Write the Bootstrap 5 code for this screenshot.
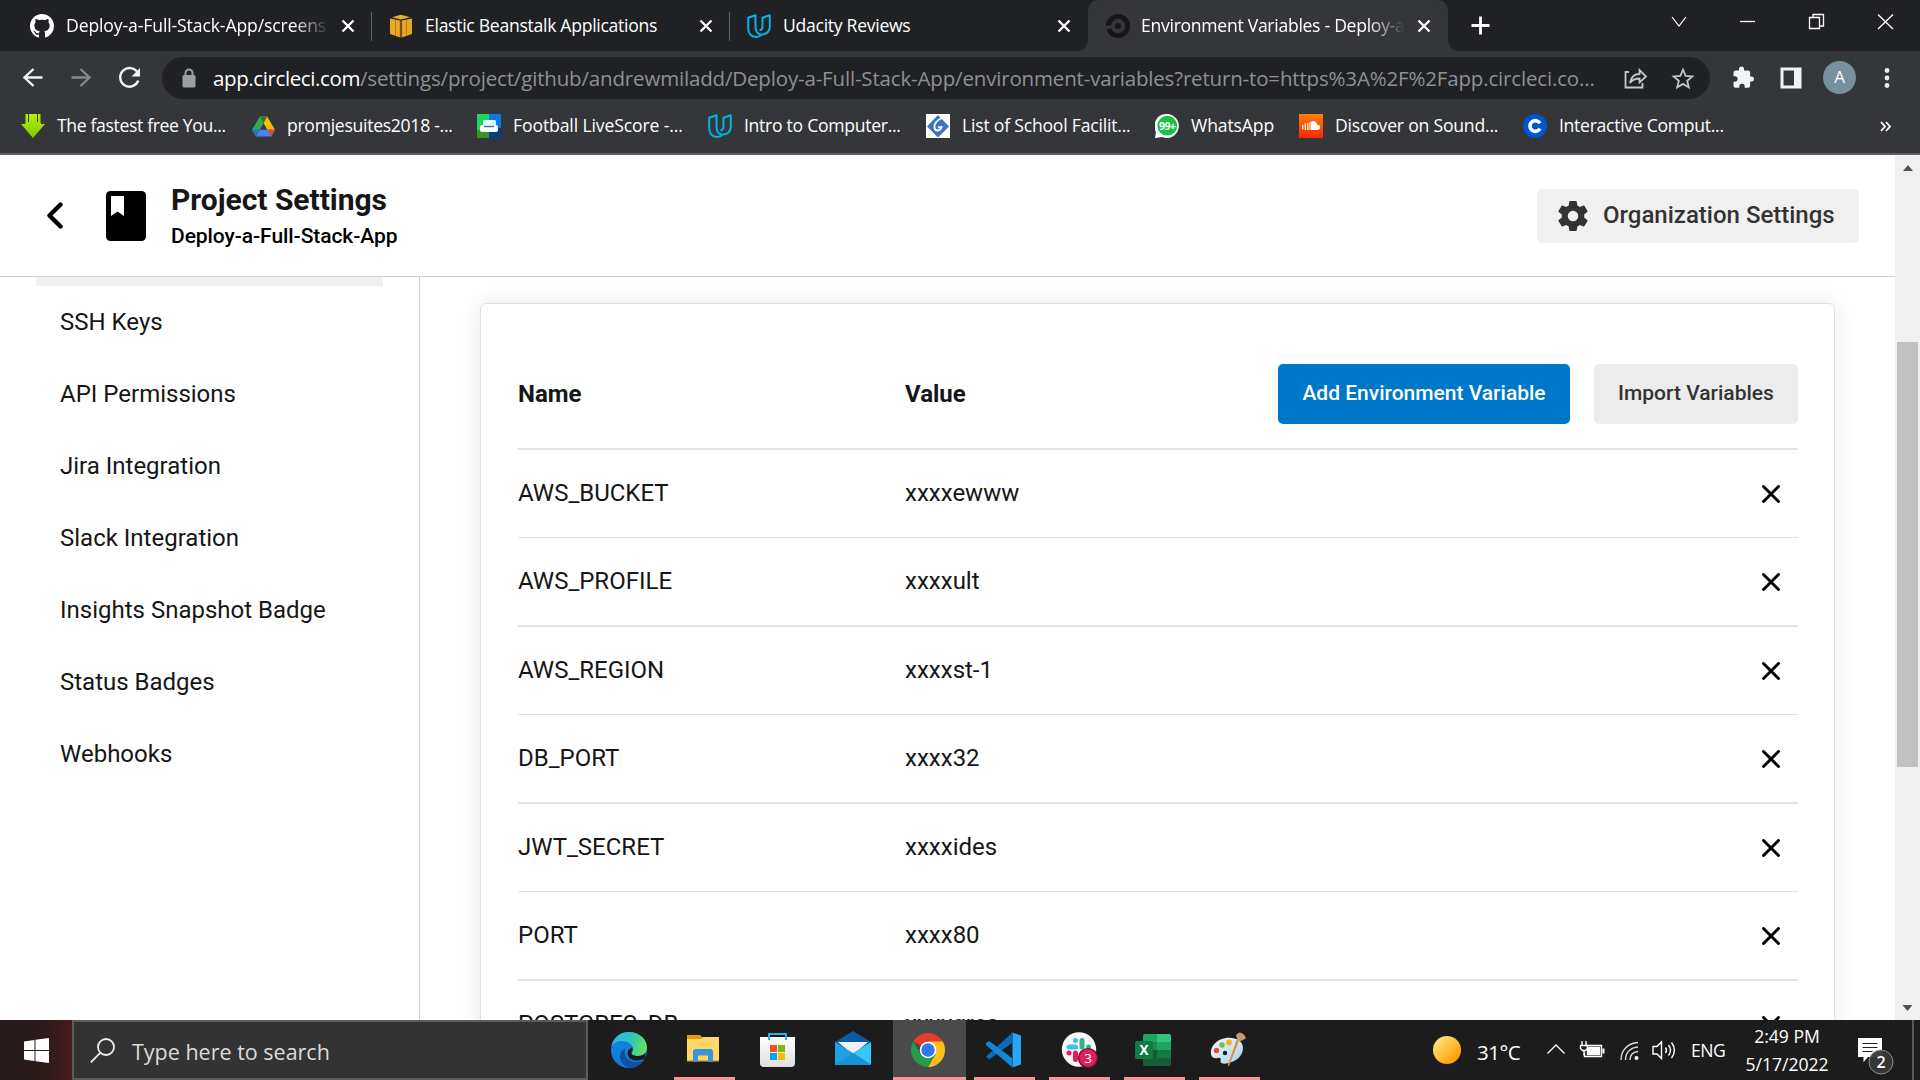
<!DOCTYPE html>
<html lang="en">
<head>
<meta charset="utf-8">
<title>Environment Variables - Deploy-a-Full-Stack-App</title>
<link href="https://cdn.jsdelivr.net/npm/bootstrap@5.3.0/dist/css/bootstrap.min.css" rel="stylesheet">
<style>
html,body{height:1080px;overflow:hidden}
body{font-family:Roboto,"Liberation Sans",sans-serif;color:#161616;line-height:1.2}
svg{display:block;flex:none}
.ui-font{font-family:"Open Sans","Noto Sans",sans-serif;white-space:nowrap}
.t1{letter-spacing:-.12px}.t2{letter-spacing:-.21px}.t3{letter-spacing:-.29px}.t4{letter-spacing:-.35px}
/* browser chrome */
.tabstrip{height:51px;background:#202124;color:#fff;font-size:17.6px}
.tab{width:358px;height:51px;position:relative;padding:0 17px}
.tab.first{width:372px;padding-left:30px}
.tab.sep::after{content:"";position:absolute;right:0;top:12px;width:1px;height:29px;background:#5f6368}
.tab.active-tab{width:360px;background:#35363a;border-radius:11px 11px 0 0;padding-left:18px}
.active-tab::before,.active-tab::after{content:"";position:absolute;bottom:0;width:10px;height:10px}
.active-tab::before{left:-10px;background:radial-gradient(circle at 0 0,transparent 9.5px,#35363a 10px)}
.active-tab::after{right:-10px;background:radial-gradient(circle at 100% 0,transparent 9.5px,#35363a 10px)}
.tab-title{width:264px;margin-left:11px;overflow:hidden}
.tab-title.mid{width:272px;margin-left:12px}
.tab-title.fade-end{-webkit-mask-image:linear-gradient(90deg,#000 86%,transparent 100%)}
.tab.first .tab-title{margin-left:12px}
.toolbar{height:52px;background:#35363a;padding-top:6px}
.omni{width:1548px;height:42px;border-radius:21px;background:#202124;font-size:20.5px;color:#8d9195;padding-left:18px}
.omni b{font-weight:400;color:#fff;letter-spacing:-.39px}
.omni .rest{letter-spacing:-.166px}
.url-text{padding-left:15px}
.avatar-a{width:33px;height:33px;border-radius:50%;background:#78909c;color:#fff;font-size:17px;margin:4px 0 0 1px}
.bookmarks{height:52px;background:#35363a;border-bottom:2px solid #5f6165;color:#fff;font-size:17.6px;padding-left:21px}
.bm{height:46px}
.bm svg{margin-right:12px}
/* page */
.viewport-area{height:865px;overflow:hidden;background:#fff}
.page{width:1895px;height:865px;overflow:hidden}
.page-head{height:122px;flex:none;border-bottom:1px solid #d0d0d0;padding:0 36px 0 47px}
.title-block{margin:2px 0 0 25px}
.page-title{font-size:30px;font-weight:700;line-height:36px;letter-spacing:-.02px}
.page-sub{font-size:21px;font-weight:500;color:#000;line-height:30px;letter-spacing:-.07px;margin-top:3px}
.org-btn{width:322px;height:54px;border-radius:5px;background:#f0f0f0;color:#333;font-size:24px;font-weight:500;padding:0 0 0 21px;border:0}
.org-btn svg{margin-right:15px}
.side{width:420px;border-right:1px solid #d0d0d0;padding-left:36px}
.side-active{width:347px;height:9px;background:#f0f0f0}
.side-link{height:72px;padding-left:24px;font-size:24px;line-height:72px;color:#161616}
.env-card{width:1355px;height:900px;margin:26px 0 0 60px;border:1px solid #e0e0e0;border-radius:6px;box-shadow:0 0 26px rgba(0,0,0,.09);padding:60px 36px 0 37px;flex:none}
.env-head{height:86px;border-bottom:2px solid #e2e2e2;font-size:24px;font-weight:700;padding-bottom:24px}
.col-name{width:387px}
.b-env{height:60px;border:0;border-radius:5px;font-size:21px;font-weight:500;padding:0}
.b-add{width:292px;background:#0078ca;color:#fff}
.b-imp{width:204px;background:#ececec;color:#333;margin-left:24px}
.env-row{height:88px;border-bottom:1px solid #e2e2e2;font-size:24px;padding-right:18px}
.env-row:nth-child(even){height:89px;border-bottom-width:2px}
.env-row svg{margin-left:auto}
.sbar{width:25px;background:#f0f0f0;padding:10px 0 9px}
.sthumb{width:21px;height:425px;background:#c1c1c1;margin-top:171px}
/* taskbar */
.taskbar{height:60px;background:#1c1c1c;color:#fff}
.start{width:72px;height:60px;background:linear-gradient(90deg,#261b1b 0%,#2b1a1a 60%,#491a1b 100%)}
.searchbox{width:516px;height:60px;background:#333;border:2px solid #5c5c5c;color:#dcdcdc;font-size:21.5px;padding-left:16px}
.searchbox span{margin:3px 0 0 17px}
.task{width:61px;height:60px;margin-right:14px;position:relative}
.task.run::after{content:"";position:absolute;left:0;right:0;bottom:0;height:3px;background:#ff9299}
.task.sel{width:73px;background:#4a4a4a;margin:0 8px 0 -6px}
.tray{font-size:17.6px}
.temp{margin:4px 0 0 16px;font-size:20.5px;letter-spacing:-.5px;width:69px}
.lang{letter-spacing:-.5px;width:51px;padding-top:1px}
.clock{width:90px;line-height:28px;margin-right:3px;letter-spacing:-.02px}
</style>
<script src="https://cdn.jsdelivr.net/npm/bootstrap@5.3.0/dist/js/bootstrap.bundle.min.js"></script>
</head>
<body>
<svg width="0" height="0" class="position-absolute">
<defs>
<symbol id="x" viewBox="0 0 14 14"><path d="M1.500 1.500l11 11M12.500 1.500l-11 11" stroke="#fff" stroke-width="2.300" fill="none"/></symbol>
<symbol id="del" viewBox="0 0 18 18"><path d="M1.500 1.500l15 15M16.500 1.500l-15 15" stroke="#000" stroke-width="2.900" stroke-linecap="round"/></symbol>
<symbol id="udacity" viewBox="0 0 24 24"><path d="M1.200 3.800L8.500 1.200V12.500c0 5 2.200 7.700 6 8.200-1.200 1.500-3 2.300-5.200 2.300-4.700 0-8.100-3.300-8.100-8.500zM14.500 20.700c5-.5 8.300-3.500 8.300-8.200V1.200L15.500 3.800v8.700c0 2.200-1 3.500-3 4" fill="none" stroke="#02b3e4" stroke-width="2" stroke-linejoin="round"/></symbol>
</defs></svg>

<div class="d-flex flex-column">
<header class="ui-font">
 <div class="tabstrip d-flex">
  <div class="tab first sep d-flex align-items-center">
   <svg width="24" height="24" viewBox="0 0 16 16" fill="#fff"><path d="M8 0C3.580 0 0 3.580 0 8c0 3.540 2.290 6.530 5.470 7.590.4.070.550-.170.550-.380 0-.190-.010-.820-.010-1.490-2.010.370-2.530-.490-2.690-.940-.090-.230-.480-.940-.820-1.130-.280-.150-.680-.520-.010-.530.630-.010 1.080.580 1.230.820.720 1.210 1.870.870 2.330.660.070-.520.280-.870.510-1.070-1.780-.200-3.640-.890-3.640-3.950 0-.870.310-1.590.820-2.150-.080-.200-.360-1.020.080-2.120 0 0 .670-.210 2.200.820.640-.180 1.320-.270 2-.270s1.360.090 2 .270c1.530-1.040 2.200-.820 2.200-.820.440 1.100.160 1.920.080 2.120.510.560.820 1.270.820 2.150 0 3.070-1.870 3.750-3.650 3.950.290.250.540.730.540 1.480 0 1.070-.010 1.930-.010 2.200 0 .210.150.460.550.380A8.010 8.010 0 0 0 16 8c0-4.420-3.580-8-8-8z"/></svg>
   <div class="tab-title fade-end t1">Deploy-a-Full-Stack-App/screens</div>
   <svg class="ms-auto" width="14" height="14"><use href="#x"/></svg>
  </div>
  <div class="tab sep d-flex align-items-center">
   <svg width="24" height="24" viewBox="0 0 24 24"><path d="M1 4.500L11.200 6.500V23.500L1 20zM23 4.500L12.800 6.500V23.500L23 20z" fill="#eba625"/><path d="M3 3.200L12 .8l9 2.400-9 2.200z" fill="#f0ad2d"/><path d="M11.200 6.500v17M12.800 6.500v17M6.500 5.500v16.300M17.500 5.500v16.300" stroke="#9b6a12" stroke-width=".7"/></svg>
   <div class="tab-title mid t3">Elastic Beanstalk Applications</div>
   <svg class="ms-auto" width="14" height="14"><use href="#x"/></svg>
  </div>
  <div class="tab d-flex align-items-center">
   <svg width="24" height="24"><use href="#udacity"/></svg>
   <div class="tab-title mid t3">Udacity Reviews</div>
   <svg class="ms-auto" width="14" height="14"><use href="#x"/></svg>
  </div>
  <div class="tab active-tab d-flex align-items-center">
   <svg width="24" height="24" viewBox="0 0 24 24"><path d="M2.800 9.300A9.600 9.600 0 1 1 2.800 14.700" fill="none" stroke="#161616" stroke-width="4.800"/><path d="M0 9.200h5.500v2.500H0z" fill="#161616"/><circle cx="12" cy="12" r="2.900" fill="#161616"/></svg>
   <div class="tab-title fade-end t3">Environment Variables - Deploy-a</div>
   <svg class="ms-auto" width="14" height="14"><use href="#x"/></svg>
  </div>
  <svg width="472" height="51" viewBox="1448 0 472 51" fill="none" stroke="#fff"><path d="M1471.500 25.500h18M1480.500 16.500v18" stroke-width="2.800"/><path d="M1672 17l7 9 7-9" stroke-width="1.200"/><path d="M1740 21.500h15" stroke-width="1.300"/><path d="M1809.500 17.500h10v11h-10zM1813 17v-2.500h10.500v11.500h-3.500" stroke-width="1.300"/><path d="M1878 14.500l15 14.500M1893 14.500l-15 14.500" stroke-width="1.300"/></svg>
 </div>
 <div class="toolbar d-flex">
  <svg width="162" height="42" viewBox="0 57 162 42" fill="none" stroke-width="2.400"><path d="M42.500 77.500H25M33.500 69l-9 8.500 9 8.500" stroke="#f1f3f4"/><path d="M71.500 77.500H89M80.500 69l9 8.500-9 8.500" stroke="#85878a"/><path d="M137.500 72.500a9.300 9.300 0 1 0 .8 8" stroke="#f1f3f4"/><path d="M140 68v8.500h-8.500z" fill="#f1f3f4"/></svg>
  <div class="omni d-flex align-items-center">
   <svg width="18" height="22" viewBox="0 0 18 22"><rect x="2.500" y="8" width="13" height="12.500" rx="1.500" fill="#9aa0a6"/><path d="M5.500 9V6a3.500 3.500 0 0 1 7 0v3" fill="none" stroke="#9aa0a6" stroke-width="2"/></svg>
   <div class="url-text"><b>app.circleci.com</b><span class="rest">/settings/project/github/andrewmiladd/Deploy-a-Full-Stack-App/environment-variables?return-to=https%3A%2F%2Fapp.circleci.co...</span></div>
   <svg class="ms-auto" width="90" height="42" viewBox="1620 57 90 42" fill="none" stroke="#c4c7ca" stroke-width="1.800"><path d="M1629 72h-3.500v15.500h17V83"/><path d="M1630 83c1-6 4-9 9.500-9v-4l6.500 6.500-6.500 6v-4c-4 0-7 1-9.500 4.500z"/><path d="M1683 69.500l2.600 6.300 6.800.6-5.200 4.400 1.600 6.600-5.800-3.500-5.800 3.500 1.600-6.600-5.200-4.400 6.800-.6z"/></svg>
  </div>
  <svg width="112" height="42" viewBox="1709 57 112 42"><path d="M1750.500 76.500h-1.400v-4a2 2 0 0 0-2-2h-4.100V69a2.500 2.500 0 0 0-5 0v1.500h-3.500a2 2 0 0 0-2 2v3.800h1.400a2.700 2.700 0 0 1 0 5.400h-1.400v4.100a2 2 0 0 0 2 2h3.800v-1.400a2.700 2.700 0 0 1 5.400 0v1.400h3.400a2 2 0 0 0 2-2v-4.300h1.400a2.500 2.500 0 0 0 0-5z" fill="#f1f3f4"/><path d="M1779.500 67.500h21v21h-21z" fill="#f1f3f4"/><path d="M1782.500 70.500h10.500v15h-10.500z" fill="#35363a"/></svg>
  <div class="avatar-a d-flex align-items-center justify-content-center">A</div>
  <svg width="62" height="42" viewBox="1856 57 62 42" fill="#f1f3f4"><circle cx="1887" cy="70.500" r="2.400"/><circle cx="1887" cy="78" r="2.400"/><circle cx="1887" cy="85.500" r="2.400"/></svg>
 </div>
 <div class="bookmarks d-flex">
  <div class="bm d-flex align-items-center" style="width:231px"><svg width="24" height="24" viewBox="0 0 24 24"><defs><linearGradient id="gd" x2="0" y2="1"><stop stop-color="#b8f000"/><stop offset="1" stop-color="#7cc800"/></linearGradient></defs><path d="M4 0h16v10h4L12 24 0 10h4z" fill="url(#gd)"/><path d="M4 0v9M20 0v9M7.500 0v8M16.500 0v8" stroke="#35363a" stroke-width="1"/></svg><span class="t4">The fastest free You...</span></div>
  <div class="bm d-flex align-items-center" style="width:225px"><svg width="23" height="22" viewBox="0 0 24 22"><path d="M8.200 1L0 15l4 7L12 8z" fill="#34a853"/><path d="M8.200 1h7.600L24 15h-8z" fill="#fbbc04"/><path d="M4 22h16l4-7H8z" fill="#4285f4"/><path d="M8 15H0l4 7z" fill="#3468c9"/><path d="M16 15h8l-4 7z" fill="#ea4335"/><path d="M8.200 1h7.600L12 8z" fill="#188038"/></svg><span class="t3">promjesuites2018 -...</span></div>
  <div class="bm d-flex align-items-center" style="width:231px"><svg width="24" height="24" viewBox="0 0 24 24"><path d="M0 0h12v24H0z" fill="#1bd760"/><path d="M12 0h12v24H12z" fill="#0a78e6"/><path d="M0 16h12v8H0z" fill="#389326"/><path d="M12 14h12v10H12z" fill="#073e86"/><rect x="6" y="6" width="13" height="7" rx="1.500" fill="#dff"/><rect x="3" y="11" width="18" height="7" rx="2" fill="#fff"/><path d="M7 12.500h10" stroke="#397b9b" stroke-width="1.500"/></svg><span class="t1">Football LiveScore -...</span></div>
  <div class="bm d-flex align-items-center" style="width:218px"><svg width="24" height="24"><use href="#udacity"/></svg><span class="t3">Intro to Computer...</span></div>
  <div class="bm d-flex align-items-center" style="width:229px"><svg width="24" height="24" viewBox="0 0 24 24"><path d="M0 0h24v24H0z" fill="#fff"/><path d="M12 1l11 11.500L12 23.500 1 12.500z" fill="#3b75bd"/><path d="M16 4c-5 2-8.500 6-7.500 10 .8 3.500 6 3.500 7-1l-3.500.5" fill="none" stroke="#fff" stroke-width="1.800"/></svg><span class="t2">List of School Facilit...</span></div>
  <div class="bm d-flex align-items-center" style="width:144px"><svg width="24" height="24" viewBox="0 0 24 24"><path d="M12 0a12 12 0 1 1-5 23L0 24l1-6A12 12 0 0 1 12 0z" fill="#fff"/><circle cx="12.300" cy="11.700" r="9.900" fill="#19c048"/><text x="12.300" y="15.500" text-anchor="middle" font-size="10.500" font-weight="700" fill="#fff" letter-spacing="-.5">99+</text></svg><span class="t1">WhatsApp</span></div>
  <div class="bm d-flex align-items-center" style="width:224px"><svg width="24" height="24" viewBox="0 0 24 24"><defs><linearGradient id="sc" x2="0" y2="1"><stop stop-color="#ff8000"/><stop offset="1" stop-color="#ff2400"/></linearGradient></defs><path d="M0 0h24v24H0z" fill="url(#sc)"/><path d="M3.800 11v4.500M6.300 9.500V16M8.800 9v7M11 8v8" stroke="#fff" stroke-width="1.200"/><path d="M12 7.800c3-1.800 5.800 0 6.200 3 1.800-.3 3 .9 3 2.500s-1.200 2.700-2.700 2.700H12z" fill="#fff"/></svg><span class="t2">Discover on Sound...</span></div>
  <div class="bm d-flex align-items-center" style="width:352px"><svg width="24" height="24" viewBox="0 0 24 24"><circle cx="12" cy="12" r="12" fill="#0056d2"/><path d="M17 9.300A5.400 5.400 0 1 0 17 14.700" fill="none" stroke="#fff" stroke-width="3.600"/></svg><span class="t3">Interactive Comput...</span></div>
  <svg class="mt-3" width="22" height="16" viewBox="0 0 22 16"><path d="M6 3l4 4.500-4 4.500M11 3l4 4.500-4 4.500" fill="none" stroke="#fff" stroke-width="1.800"/></svg>
 </div>
</header>

<div class="viewport-area d-flex">
 <div class="page d-flex flex-column">
  <div class="page-head d-flex align-items-center">
   <svg width="17" height="28" viewBox="0 0 17 28"><path d="M13.500 2.500L2.500 13.500l11 11" fill="none" stroke="#000" stroke-width="4.400" stroke-linecap="round" stroke-linejoin="round"/></svg>
   <svg width="40" height="50" viewBox="0 0 40 50" style="margin-left:42px"><rect width="40" height="50" rx="4.500"/><path d="M5 5h13v20l-6.500-4.500L5 25z" fill="#fff"/></svg>
   <div class="title-block"><div class="page-title">Project Settings</div><div class="page-sub">Deploy-a-Full-Stack-App</div></div>
   <button class="org-btn ms-auto d-flex align-items-center"><svg width="30" height="30" viewBox="2 2 20 20" fill="#333"><path d="M19.430 12.980c.040-.320.070-.640.070-.980s-.030-.660-.070-.980l2.110-1.650c.190-.150.240-.420.120-.640l-2-3.460c-.120-.220-.390-.300-.610-.220l-2.490 1c-.520-.400-1.080-.730-1.690-.980l-.380-2.650C14.460 2.180 14.250 2 14 2h-4c-.250 0-.460.180-.490.420l-.380 2.650c-.610.250-1.170.590-1.690.980l-2.490-1c-.230-.090-.490 0-.610.220l-2 3.460c-.130.220-.070.490.120.640l2.110 1.650c-.040.320-.070.650-.070.980s.030.660.070.980l-2.110 1.650c-.190.150-.240.420-.120.640l2 3.460c.120.220.390.300.610.220l2.490-1c.520.400 1.080.730 1.690.980l.380 2.650c.030.240.240.420.490.420h4c.250 0 .460-.180.490-.420l.380-2.650c.610-.250 1.170-.590 1.690-.980l2.490 1c.230.090.490 0 .610-.220l2-3.460c.120-.220.070-.490-.120-.640l-2.110-1.650zM12 15.500a3.500 3.500 0 1 1 0-7 3.500 3.500 0 0 1 0 7z"/></svg>Organization Settings</button>
  </div>
  <div class="d-flex flex-grow-1 overflow-hidden">
   <nav class="side flex-shrink-0">
    <div class="side-active"></div>
    <div class="side-link">SSH Keys</div><div class="side-link">API Permissions</div><div class="side-link">Jira Integration</div><div class="side-link">Slack Integration</div><div class="side-link">Insights Snapshot Badge</div><div class="side-link">Status Badges</div><div class="side-link">Webhooks</div>
   </nav>
   <main class="env-card">
    <div class="env-head d-flex align-items-center"><div class="col-name">Name</div><div>Value</div><button class="b-env b-add ms-auto">Add Environment Variable</button><button class="b-env b-imp">Import Variables</button></div>
    <div class="env-rows">
     <div class="env-row d-flex align-items-center"><div class="col-name">AWS_BUCKET</div><div>xxxxewww</div><svg width="18" height="18"><use href="#del"/></svg></div>
     <div class="env-row d-flex align-items-center"><div class="col-name">AWS_PROFILE</div><div>xxxxult</div><svg width="18" height="18"><use href="#del"/></svg></div>
     <div class="env-row d-flex align-items-center"><div class="col-name">AWS_REGION</div><div>xxxxst-1</div><svg width="18" height="18"><use href="#del"/></svg></div>
     <div class="env-row d-flex align-items-center"><div class="col-name">DB_PORT</div><div>xxxx32</div><svg width="18" height="18"><use href="#del"/></svg></div>
     <div class="env-row d-flex align-items-center"><div class="col-name">JWT_SECRET</div><div>xxxxides</div><svg width="18" height="18"><use href="#del"/></svg></div>
     <div class="env-row d-flex align-items-center"><div class="col-name">PORT</div><div>xxxx80</div><svg width="18" height="18"><use href="#del"/></svg></div>
     <div class="env-row d-flex align-items-center"><div class="col-name">POSTGRES_DB</div><div>xxxxgres</div><svg width="18" height="18"><use href="#del"/></svg></div>
    </div>
   </main>
  </div>
 </div>
 <div class="sbar d-flex flex-column align-items-center">
  <svg width="10" height="6" viewBox="0 0 10 6"><path d="M0 6l5-6 5 6z" fill="#505050"/></svg>
  <div class="sthumb"></div>
  <svg class="mt-auto" width="11" height="6" viewBox="0 0 10 6"><path d="M0 0l5 6 5-6z" fill="#505050"/></svg>
 </div>
</div>

<footer class="taskbar ui-font d-flex">
 <div class="start d-flex align-items-center justify-content-center"><svg width="25" height="25" viewBox="0 0 25 25" fill="#fff"><path d="M0 3.500L10.500 2v10H0zM11.500 1.800L25 0v12H11.500zM0 13h10.500v10L0 21.500zM11.500 13H25v12l-13.500-1.800z"/></svg></div>
 <div class="searchbox d-flex align-items-center"><svg width="25" height="25" viewBox="0 0 25 25" fill="none" stroke="#eee" stroke-width="1.800"><circle cx="16" cy="9" r="8"/><path d="M10.500 14.700L.8 24.300"/></svg><span>Type here to search</span></div>
 <div class="task d-flex align-items-center justify-content-center ms-2 ps-1" style="margin-right:17px">
  <svg width="36" height="36" viewBox="0 0 36 36"><defs><linearGradient id="e1" x1="0" y1=".3" x2="1" y2=".5"><stop stop-color="#2fb6ee"/><stop offset=".5" stop-color="#2bc4bd"/><stop offset="1" stop-color="#66e05b"/></linearGradient><linearGradient id="e2" x2="0" y2="1"><stop stop-color="#1681d4"/><stop offset="1" stop-color="#0b7fdf"/></linearGradient></defs><circle cx="18" cy="18" r="18" fill="url(#e2)"/><path d="M.4 14.500C2 6 9 0 18 0c10 0 18 7 18 15.500 0 5-4 8.500-9 8.500-4 0-6.500-1.500-6.500-2.800 0-.9 1.500-1.700 1.500-4.200 0-4-5-8-11-8C6 9 2.500 11 .4 14.500z" fill="url(#e1)"/><path d="M14.500 16c-2 7 1.500 14 10.500 14 3 0 6-1 8-2.500C30 33 25 36 19 36c-6-1-10-6-10-11.500 0-4 2.200-7 5.500-8.500z" fill="#0f50a0"/><path d="M20.500 21.200c0 1.300 2.500 2.800 6.500 2.800 3.500 0 6-1.500 7.500-3.500V27l-3 .5c-6 2.500-13 .5-14.500-4-1-4 1-7.500 4.500-8 .8 3-1 4.800-1 5.700z" fill="#1c1c1c"/></svg>
 </div>
 <div class="task run d-flex align-items-center justify-content-center"><svg width="32" height="27" viewBox="0 0 32 27" class="mb-1 me-1"><path d="M0 0h13l3 3v6H0z" fill="#e0a000"/><path d="M0 4h14l2-2h16v24H0z" fill="#ffd869"/><path d="M0 25h32v1.500H0z" fill="#e3a82f"/><path d="M6 27V16.500c0-1.500 1-2.500 2.500-2.500h15c1.500 0 2.500 1 2.500 2.500V27h-5v-6.500H11V27z" fill="#3a94dc"/></svg></div>
 <div class="task d-flex align-items-center justify-content-center"><svg width="35" height="36" viewBox="0 0 35 36" class="me-1"><defs><linearGradient id="st" x2="0" y2="1"><stop stop-color="#fff"/><stop offset="1" stop-color="#dedede"/></linearGradient></defs><path d="M0 5h35v26a4 4 0 0 1-4 4H4a4 4 0 0 1-4-4z" fill="url(#st)"/><path d="M9 8V2h17v6" fill="none" stroke="#28afea" stroke-width="2"/><path d="M10 13h7v7h-7z" fill="#f25022"/><path d="M18 13h7v7h-7z" fill="#7fba00"/><path d="M10 21h7v7h-7z" fill="#00a4ef"/><path d="M18 21h7v7h-7z" fill="#ffb900"/></svg></div>
 <div class="task d-flex align-items-center justify-content-center"><svg width="36" height="34" viewBox="0 0 36 34" class="mb-1 me-1"><path d="M0 11L18 0l18 11v5H0z" fill="#0c59a4"/><path d="M3 11h30L18 24z" fill="#f1f1f3"/><path d="M0 11l18 11L36 34H0z" fill="#1fa1e2"/><path d="M36 11L18 22l18 12z" fill="#36c7f5"/><path d="M0 34h36L18 22z" fill="#1794d9"/></svg></div>
 <div class="task run sel d-flex align-items-center justify-content-center"><svg class="me-1" width="34" height="34" viewBox="0 0 34 34"><path d="M17 17L2.300 8.500A17 17 0 0 1 31.700 8.500z" fill="#e33b2e"/><path d="M17 8.500h14.700A17 17 0 0 1 17 34l7.400-12.700z" fill="#fdc018"/><path d="M2.300 8.500A17 17 0 0 0 17 34l7.400-12.700L17 17 9.600 21.200z" fill="#259c4c"/><circle cx="17" cy="17" r="8.300" fill="#fff"/><circle cx="17" cy="17" r="6.700" fill="#2f78f0"/></svg></div>
 <div class="task run d-flex align-items-center justify-content-center"><svg class="me-1" width="36" height="36" viewBox="0 0 36 36"><path d="M1 24.500L27 1v10L4 27.500z" fill="#0a6bb8"/><path d="M1 11l3-2 23 17v9L1 13z" fill="#1189d8"/><path d="M26 0l10 3.500v29L26 36c1 0 1.500-.5 1.500-1.500v-33C27.500.5 27 0 26 0z" fill="#27a7f3"/></svg></div>
 <div class="task run d-flex align-items-center justify-content-center"><svg width="37" height="36" viewBox="0 0 37 36"><circle cx="18" cy="17.500" r="17.200" fill="#f7f7f7"/><g stroke-width="5" stroke-linecap="round" fill="none"><path d="M14.500 8.500v0" stroke="#36c5f0"/><path d="M8 15h6.500" stroke="#36c5f0"/><path d="M21 8.500V15" stroke="#2eb67d"/><path d="M27.500 15v0" stroke="#2eb67d"/><path d="M14.500 21v6.500M8 21v0" stroke="#e01e5a"/></g><circle cx="27" cy="26" r="9.500" fill="#e01e5a" stroke="#5c1330" stroke-width="1.200"/><text x="27" y="31" font-size="13.500" text-anchor="middle" fill="#fff">3</text></svg></div>
 <div class="task run d-flex align-items-center justify-content-center"><svg class="me-1" width="36" height="32" viewBox="0 0 36 32"><rect x="8" width="28" height="32" rx="1.500" fill="#185c37"/><path d="M9.500 0H22v8H8V1.500z" fill="#21a366"/><path d="M22 0h12.500l1.500 1.500V8H22z" fill="#33c481"/><path d="M8 8h14v8H8z" fill="#1a8a4f"/><path d="M22 8h14v8H22z" fill="#21a366"/><path d="M22 16h14v8H22z" fill="#107c41"/><rect y="7" width="18" height="18" rx="1.500" fill="#0f7b40"/><text x="9" y="20.800" font-size="13.500" font-weight="700" text-anchor="middle" fill="#fff">X</text></svg></div>
 <div class="task run d-flex align-items-center justify-content-center"><svg class="me-1" width="36" height="36" viewBox="0 0 36 36"><defs><linearGradient id="pl" x2="1" y2="1"><stop stop-color="#f6fbff"/><stop offset="1" stop-color="#a5cdec"/></linearGradient></defs><path d="M16 6C7 7 0 14 1 22c.5 4 4 5 7 4 3-.8 3 1 2.500 3s2 3 6 2.500C26 30 33 24 33 16 33 9 26 5 16 6z" fill="url(#pl)"/><circle cx="15" cy="21" r="2.200" fill="#1c1c1c"/><circle cx="6.500" cy="18.500" r="2.700" fill="#e8473d"/><circle cx="12" cy="13" r="2.700" fill="#67c342"/><circle cx="19" cy="10.500" r="2.900" fill="#f7b51c"/><path d="M29 8.500l-2-1.500-9 25.500c-.5 2 .8 2 1.500.6z" fill="#e8862a"/><path d="M26 3c2-2 4-3.500 5-2 2 0 4 2.500 5 5-2 1.500-5 3.500-8 3.500z" fill="#c59b6d"/></svg></div>
 <div class="tray d-flex align-items-center ms-auto">
  <svg width="28" height="28" viewBox="0 0 28 28"><defs><linearGradient id="sun" x2="1" y2="1"><stop offset=".1" stop-color="#ffe680"/><stop offset=".85" stop-color="#ff9d00"/></linearGradient></defs><circle cx="14" cy="14" r="14" fill="url(#sun)"/></svg>
  <span class="temp">31°C</span>
  <svg width="145" height="60" viewBox="1546 1020 145 60" fill="none" stroke="#fff" stroke-width="1.400"><path d="M1547.500 1053.500l8.500-8.500 8.500 8.500"/><path d="M1586 1045.500h15.500v11h-17v-4"/><path d="M1587.500 1047.500h12v7h-12z" fill="#fff"/><path d="M1603.500 1048.500v5" stroke-width="2"/><path d="M1582 1041v4M1586 1041v4M1580.500 1045.500h7v3l-2 2h-3l-2-2zM1584 1050.500v5"/><path d="M1621 1060c0-10 7-17 17-17.500M1625.500 1060c0-7.500 5-12.500 12.500-13M1630 1060c0-5 3-8 8-8.500" stroke="#ddd"/><circle cx="1636.500" cy="1058" r="2" fill="#fff" stroke="none"/><path d="M1653 1046.500h4l4.500-4.500v16.500l-4.500-4.500h-4zM1665.500 1047.500q2 2.500 0 5.500M1668.500 1045q4 5 0 10.500M1671.500 1042.500q6 8 0 15.500"/></svg>
  <span class="lang">ENG</span>
  <div class="clock text-center"><div>2:49 PM</div><div>5/17/2022</div></div>
  <svg width="85" height="60" viewBox="1835 1020 85 60"><path d="M1858 1038h24v19h-14l-4.500 5v-5h-5.500z" fill="#fff"/><path d="M1862.500 1043.500h15M1862.500 1047.500h15M1862.500 1051.500h10" stroke="#222" stroke-width="1.200"/><circle cx="1881" cy="1062" r="12" fill="#383838" fill-opacity=".95" stroke="#8c8c8c"/><text x="1881" y="1067.500" font-size="16" font-weight="600" fill="#fff" text-anchor="middle">2</text><path d="M1913 1020v60" stroke="#6b6b6b" stroke-width="1.500"/></svg>
 </div>
</footer>
</div>
</body>
</html>
